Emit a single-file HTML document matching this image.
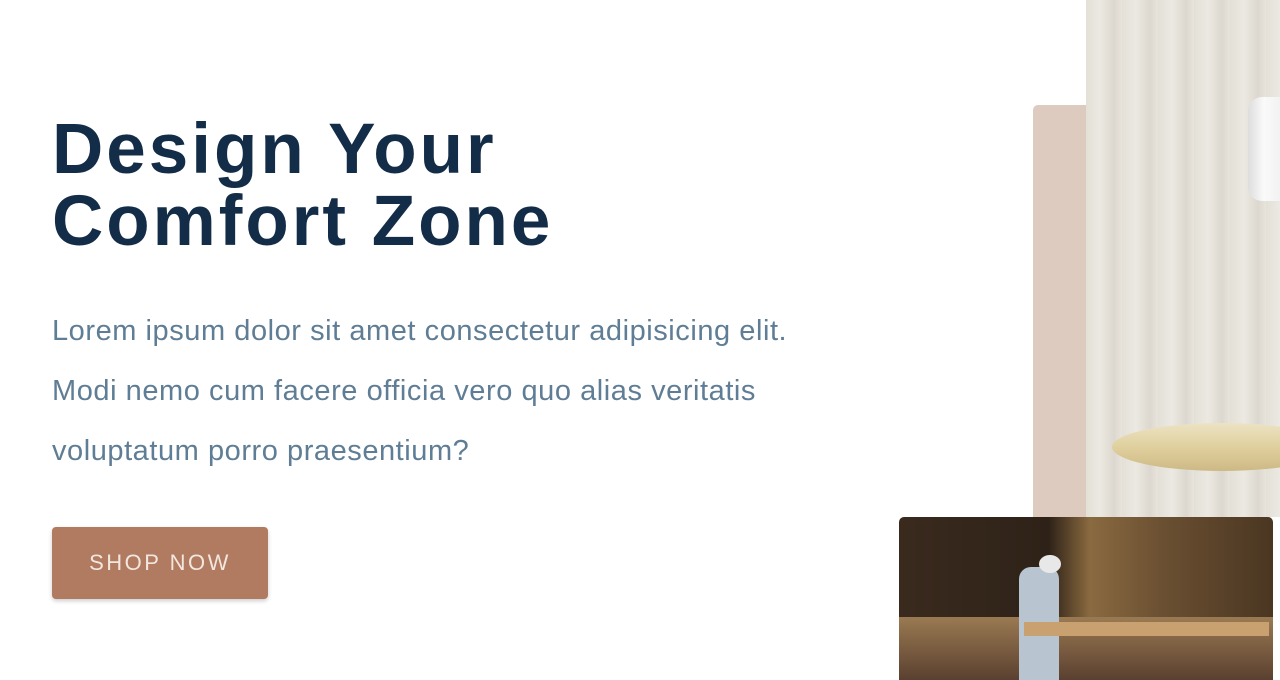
<!DOCTYPE html>
<html><head><style>
*{margin:0;padding:0;box-sizing:border-box}
body{width:1280px;height:680px;overflow:hidden;background:#fff;font-family:"Liberation Sans",sans-serif;position:relative}
h1{position:absolute;left:52px;top:114px;font-size:71px;line-height:72px;font-weight:bold;color:#132c47;letter-spacing:3px}
p{position:absolute;left:52px;top:301px;width:860px;font-size:29px;line-height:60px;color:#5f7d95;letter-spacing:0.55px;white-space:nowrap}
.btn{position:absolute;left:52px;top:527px;width:216px;height:72px;background:#b07b60;border-radius:4px;color:#f3e6de;font-size:22px;letter-spacing:2.5px;display:flex;align-items:center;justify-content:center;box-shadow:0 2px 4px rgba(0,0,0,.2)}
.pink{position:absolute;left:1033px;top:105px;width:60px;height:420px;background:#decbbf;border-radius:5px 0 0 0}
.curt{position:absolute;left:1086px;top:0;width:194px;height:517px;background:repeating-linear-gradient(90deg,#e3e0d8 0,#ece9e2 14px,#dcd8cf 28px,#e8e4dc 36px);}
.lamp{position:absolute;left:1248px;top:97px;width:40px;height:104px;background:linear-gradient(90deg,#ddd,#fafafa 40%,#eee);border-radius:14px 0 0 14px}
.table{position:absolute;left:1112px;top:423px;width:220px;height:48px;border-radius:50%;background:linear-gradient(180deg,#ece3c4,#e0d09e 50%,#cdb985)}
.photo{position:absolute;left:899px;top:517px;width:374px;height:163px;border-radius:5px 5px 0 0;overflow:hidden;background:linear-gradient(90deg,#3a2a1e 0,#2e2218 40%,#8a6a40 51%,#6b5032 70%,#4a3622 100%)}
</style></head><body>
<h1>Design Your<br>Comfort Zone</h1>
<p>Lorem ipsum dolor sit amet consectetur adipisicing elit.<br>Modi nemo cum facere officia vero quo alias veritatis<br>voluptatum porro praesentium?</p>
<div class="btn">SHOP NOW</div>
<div class="pink"></div>
<div class="curt"></div>
<div class="lamp"></div>
<div class="table"></div>
<div class="photo">
<div style="position:absolute;left:0;top:100px;width:374px;height:63px;background:linear-gradient(180deg,#9a7a52,#5a4030)"></div>
<div style="position:absolute;left:120px;top:50px;width:40px;height:113px;background:#b8c4d0;border-radius:12px 12px 0 0"></div>
<div style="position:absolute;left:140px;top:38px;width:22px;height:18px;background:#e8e8e8;border-radius:50%"></div>
<div style="position:absolute;left:125px;top:105px;width:245px;height:14px;background:#c9a070"></div>
</div>
</body></html>
